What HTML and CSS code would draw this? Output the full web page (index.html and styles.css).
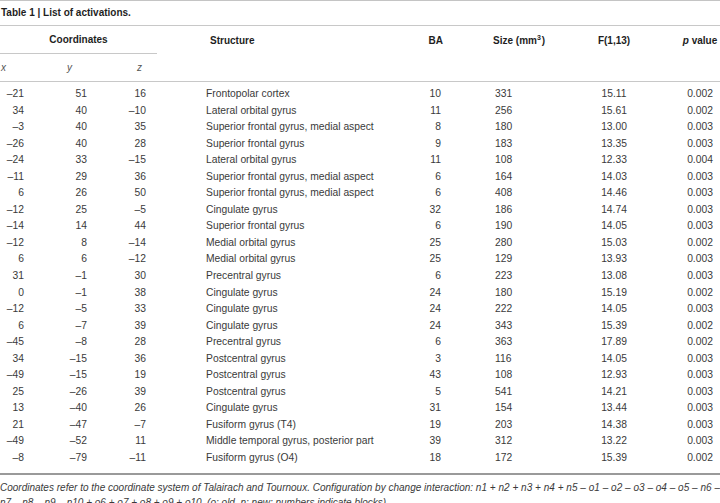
FILE: index.html
```html
<!DOCTYPE html>
<html>
<head>
<meta charset="utf-8">
<link rel="stylesheet" href="styles.css">
</head>
<body>
<div class="page">
  <div class="caption">Table 1 | List of activations.</div>
  <table class="tbl">
    <colgroup>
      <col class="c-x"><col class="c-y"><col class="c-z"><col class="c-s"><col class="c-ba"><col class="c-size"><col class="c-f"><col class="c-p">
    </colgroup>
    <thead>
      <tr class="h1">
        <th colspan="3" class="coord">Coordinates</th>
        <th class="struct">Structure</th>
        <th class="ba">BA</th>
        <th class="size">Size (mm<sup class="sup">3</sup>)</th>
        <th class="f">F(1,13)</th>
        <th class="p"><i>p</i> value</th>
      </tr>
      <tr class="h2">
        <th class="sx">x</th>
        <th class="sy">y</th>
        <th class="sz">z</th>
        <th colspan="5"></th>
      </tr>
    </thead>
    <tbody>
      <tr><td class="x">–21</td><td class="y">51</td><td class="z">16</td><td class="struct">Frontopolar cortex</td><td class="ba">10</td><td class="size">331</td><td class="f">15.11</td><td class="p">0.002</td></tr>
      <tr><td class="x">34</td><td class="y">40</td><td class="z">–10</td><td class="struct">Lateral orbital gyrus</td><td class="ba">11</td><td class="size">256</td><td class="f">15.61</td><td class="p">0.002</td></tr>
      <tr><td class="x">–3</td><td class="y">40</td><td class="z">35</td><td class="struct">Superior frontal gyrus, medial aspect</td><td class="ba">8</td><td class="size">180</td><td class="f">13.00</td><td class="p">0.003</td></tr>
      <tr><td class="x">–26</td><td class="y">40</td><td class="z">28</td><td class="struct">Superior frontal gyrus</td><td class="ba">9</td><td class="size">183</td><td class="f">13.35</td><td class="p">0.003</td></tr>
      <tr><td class="x">–24</td><td class="y">33</td><td class="z">–15</td><td class="struct">Lateral orbital gyrus</td><td class="ba">11</td><td class="size">108</td><td class="f">12.33</td><td class="p">0.004</td></tr>
      <tr><td class="x">–11</td><td class="y">29</td><td class="z">36</td><td class="struct">Superior frontal gyrus, medial aspect</td><td class="ba">6</td><td class="size">164</td><td class="f">14.03</td><td class="p">0.003</td></tr>
      <tr><td class="x">6</td><td class="y">26</td><td class="z">50</td><td class="struct">Superior frontal gyrus, medial aspect</td><td class="ba">6</td><td class="size">408</td><td class="f">14.46</td><td class="p">0.003</td></tr>
      <tr><td class="x">–12</td><td class="y">25</td><td class="z">–5</td><td class="struct">Cingulate gyrus</td><td class="ba">32</td><td class="size">186</td><td class="f">14.74</td><td class="p">0.003</td></tr>
      <tr><td class="x">–14</td><td class="y">14</td><td class="z">44</td><td class="struct">Superior frontal gyrus</td><td class="ba">6</td><td class="size">190</td><td class="f">14.05</td><td class="p">0.003</td></tr>
      <tr><td class="x">–12</td><td class="y">8</td><td class="z">–14</td><td class="struct">Medial orbital gyrus</td><td class="ba">25</td><td class="size">280</td><td class="f">15.03</td><td class="p">0.002</td></tr>
      <tr><td class="x">6</td><td class="y">6</td><td class="z">–12</td><td class="struct">Medial orbital gyrus</td><td class="ba">25</td><td class="size">129</td><td class="f">13.93</td><td class="p">0.003</td></tr>
      <tr><td class="x">31</td><td class="y">–1</td><td class="z">30</td><td class="struct">Precentral gyrus</td><td class="ba">6</td><td class="size">223</td><td class="f">13.08</td><td class="p">0.003</td></tr>
      <tr><td class="x">0</td><td class="y">–1</td><td class="z">38</td><td class="struct">Cingulate gyrus</td><td class="ba">24</td><td class="size">180</td><td class="f">15.19</td><td class="p">0.002</td></tr>
      <tr><td class="x">–12</td><td class="y">–5</td><td class="z">33</td><td class="struct">Cingulate gyrus</td><td class="ba">24</td><td class="size">222</td><td class="f">14.05</td><td class="p">0.003</td></tr>
      <tr><td class="x">6</td><td class="y">–7</td><td class="z">39</td><td class="struct">Cingulate gyrus</td><td class="ba">24</td><td class="size">343</td><td class="f">15.39</td><td class="p">0.002</td></tr>
      <tr><td class="x">–45</td><td class="y">–8</td><td class="z">28</td><td class="struct">Precentral gyrus</td><td class="ba">6</td><td class="size">363</td><td class="f">17.89</td><td class="p">0.002</td></tr>
      <tr><td class="x">34</td><td class="y">–15</td><td class="z">36</td><td class="struct">Postcentral gyrus</td><td class="ba">3</td><td class="size">116</td><td class="f">14.05</td><td class="p">0.003</td></tr>
      <tr><td class="x">–49</td><td class="y">–15</td><td class="z">19</td><td class="struct">Postcentral gyrus</td><td class="ba">43</td><td class="size">108</td><td class="f">12.93</td><td class="p">0.003</td></tr>
      <tr><td class="x">25</td><td class="y">–26</td><td class="z">39</td><td class="struct">Postcentral gyrus</td><td class="ba">5</td><td class="size">541</td><td class="f">14.21</td><td class="p">0.003</td></tr>
      <tr><td class="x">13</td><td class="y">–40</td><td class="z">26</td><td class="struct">Cingulate gyrus</td><td class="ba">31</td><td class="size">154</td><td class="f">13.44</td><td class="p">0.003</td></tr>
      <tr><td class="x">21</td><td class="y">–47</td><td class="z">–7</td><td class="struct">Fusiform gyrus (T4)</td><td class="ba">19</td><td class="size">203</td><td class="f">14.38</td><td class="p">0.003</td></tr>
      <tr><td class="x">–49</td><td class="y">–52</td><td class="z">11</td><td class="struct">Middle temporal gyrus, posterior part</td><td class="ba">39</td><td class="size">312</td><td class="f">13.22</td><td class="p">0.003</td></tr>
      <tr><td class="x">–8</td><td class="y">–79</td><td class="z">–11</td><td class="struct">Fusiform gyrus (O4)</td><td class="ba">18</td><td class="size">172</td><td class="f">15.39</td><td class="p">0.002</td></tr>
    </tbody>
  </table>
  <p class="note"><span class="line1">Coordinates refer to the coordinate system of Talairach and Tournoux. Configuration by change interaction: n1 + n2 + n3 + n4 + n5 – o1 – o2 – o3 – o4 – o5 – n6 –</span><span class="line2">n7 – n8 – n9 – n10 + o6 + o7 + o8 + o9 + o10. (o: old, n: new; numbers indicate blocks).</span></p>
</div>
</body>
</html>
```

FILE: styles.css
```css
html, body {
  margin: 0;
  padding: 0;
  background: #ffffff;
}

.page {
  width: 720px;
  font-family: "Liberation Sans", Arial, sans-serif;
  font-size: 10px;
  color: #3a3a3a;
  border-top: 1px solid #c4c4c4;
}

.caption {
  height: 24px;
  line-height: 23px;
  padding-left: 1px;
  font-weight: bold;
  color: #1e1e1e;
  border-bottom: 1px solid #c8c8c8;
}

.tbl {
  width: 720px;
  table-layout: fixed;
  border-collapse: separate;
  border-spacing: 0;
}

.c-x { width: 52px; }
.c-y { width: 52px; }
.c-z { width: 53px; }
.c-s { width: 243px; }
.c-ba { width: 50px; }
.c-size { width: 110px; }
.c-f { width: 108px; }
.c-p { width: 52px; }

.tbl th {
  padding: 0;
  font-weight: bold;
  color: #1e1e1e;
  text-align: left;
}

.h1 th {
  height: 27px;
  line-height: 25px;
  vertical-align: middle;
}

.h1 .coord {
  text-align: center;
  border-bottom: 1px solid #c8c8c8;
}

.sup {
  font-size: 7px;
  line-height: 0;
  vertical-align: 4px;
  padding-right: 1px;
}

.h1 .struct { padding-left: 53px; }
.h1 .ba { text-align: right; padding-right: 7px; }
.h1 .size { padding-left: 43px; }
.h1 .f { text-align: center; }
.h1 .p { text-align: center; padding-left: 12px; }

.h2 th {
  height: 27px;
  line-height: 26px;
  font-weight: normal;
  font-style: italic;
  color: #555;
  border-bottom: 1px solid #c8c8c8;
}

.h2 .sx { padding-left: 1px; }
.h2 .sy { padding-left: 15px; }
.h2 .sz { padding-left: 33px; }

.tbl td {
  padding: 0;
  height: 16.55px;
  line-height: 16.55px;
  font-size: 10.3px;
  white-space: nowrap;
}

.tbl tbody tr:first-child td { padding-top: 4px; }
.tbl tbody tr:last-child td {
  padding-bottom: 6px;
  border-bottom: 2px solid #9a9a9a;
}

.tbl td.x { text-align: right; padding-right: 28px; }
.tbl td.y { text-align: right; padding-right: 17px; }
.tbl td.z { text-align: right; padding-right: 11px; }
.tbl td.struct { padding-left: 49px; }
.tbl td.ba { text-align: right; padding-right: 9px; }
.tbl td.size { padding-left: 45px; }
.tbl td.f { text-align: center; }
.tbl td.p { text-align: center; padding-left: 12px; }

.note {
  margin: 0;
  padding-top: 5px;
  font-style: italic;
  line-height: 15px;
  color: #3a3a3a;
}

.line1 {
  display: block;
  text-align: justify;
  text-align-last: justify;
}

.line2 {
  display: block;
}
```
